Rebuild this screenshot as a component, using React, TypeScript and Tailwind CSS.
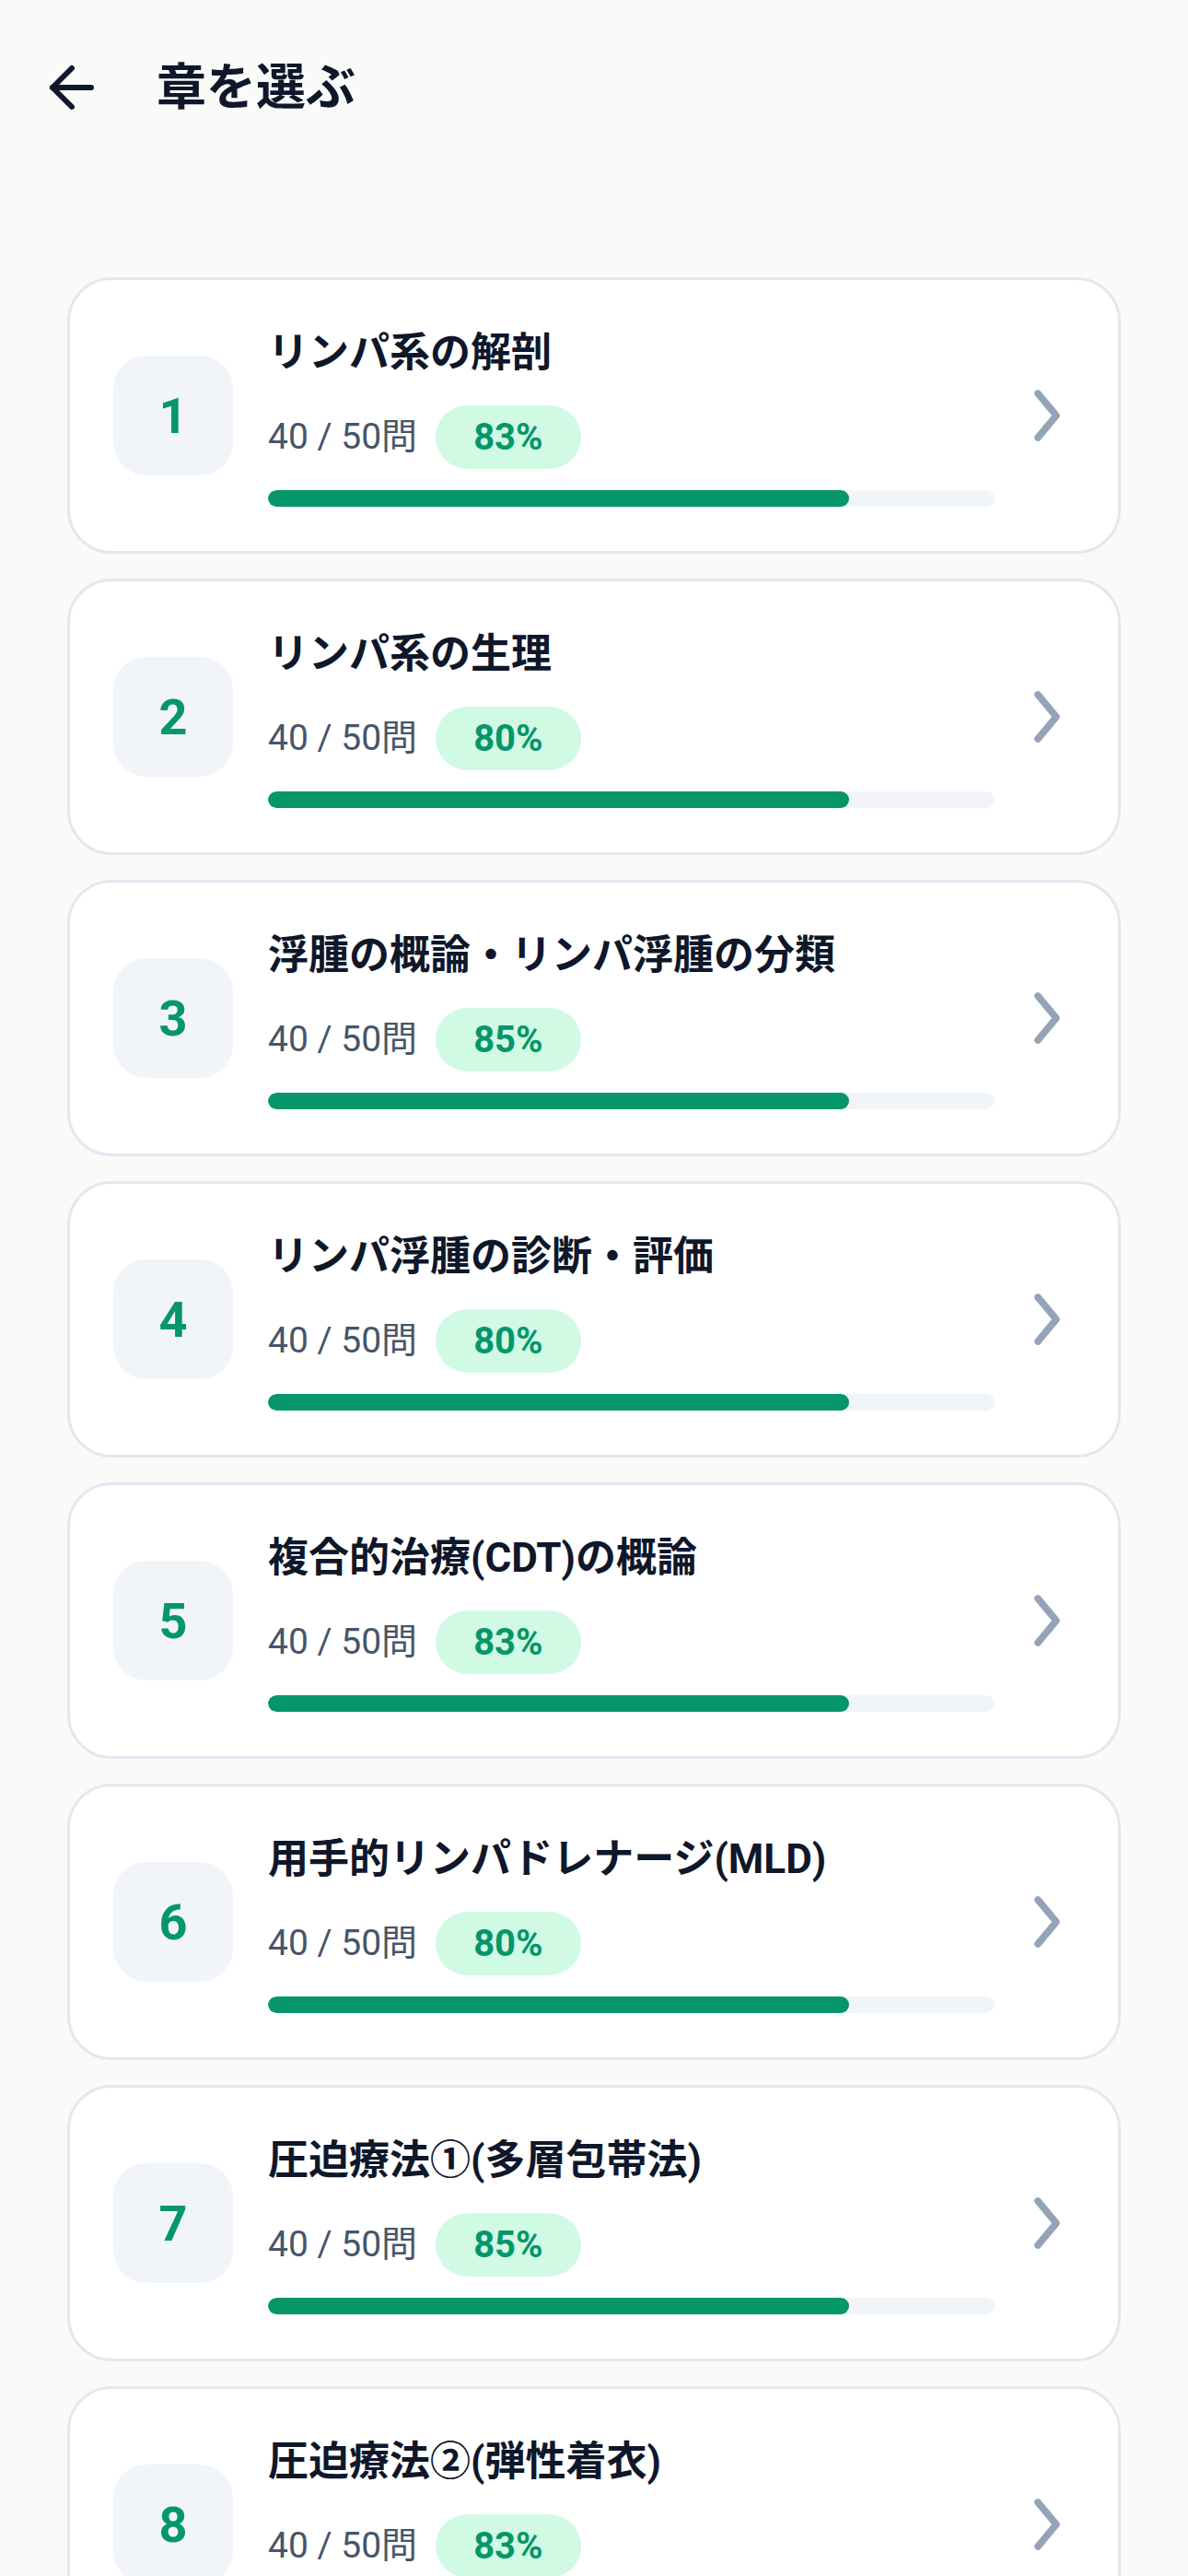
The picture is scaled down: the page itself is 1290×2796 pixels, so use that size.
import { ArrowLeft } from "lucide-react";

const chapters = [
  { no: 1, title: "リンパ系の解剖", rate: 83 },
  { no: 2, title: "リンパ系の生理", rate: 80 },
  { no: 3, title: "浮腫の概論・リンパ浮腫の分類", rate: 85 },
  { no: 4, title: "リンパ浮腫の診断・評価", rate: 80 },
  { no: 5, title: "複合的治療(CDT)の概論", rate: 83 },
  { no: 6, title: "用手的リンパドレナージ(MLD)", rate: 80 },
  { no: 7, title: "圧迫療法①(多層包帯法)", rate: 85 },
  { no: 8, title: "圧迫療法②(弾性着衣)", rate: 83 },
];

function Chevron() {
  return (
    <svg width="28" height="56" viewBox="0 0 28 56" fill="none" className="shrink-0">
      <polyline
        points="4,4 24,28 4,52"
        stroke="#94a3b8"
        strokeWidth="7.5"
        strokeLinecap="round"
        strokeLinejoin="round"
      />
    </svg>
  );
}

function ChapterCard({ no, title, rate }: { no: number; title: string; rate: number }) {
  return (
    <button
      type="button"
      className="flex items-center w-full text-left bg-white border-[3px] border-[#e2e8f0] rounded-[48px] pl-[47px] pr-[63px] py-[48px]"
    >
      <div className="w-[130px] h-[130px] shrink-0 rounded-[36px] bg-[#f1f5f9] flex items-center justify-center text-[54px] font-bold text-[#059669]">
        {no}
      </div>
      <div className="ml-[38px] flex-1 flex flex-col">
        <h2 className="text-[44px] leading-[63px] font-bold text-[#0f172a]">{title}</h2>
        <div className="mt-[25px] flex items-center gap-[20px]">
          <span className="text-[39px] text-[#475569]">40 / 50問</span>
          <span className="h-[69px] px-[41px] rounded-full bg-[#d1fae5] text-[#059669] text-[40px] font-bold flex items-center">
            {rate}%
          </span>
        </div>
        <div className="mt-[23px] h-[18px] rounded-full bg-[#f1f5f9] overflow-hidden">
          <div className="h-full rounded-full bg-[#059669]" style={{ width: "80%" }} />
        </div>
      </div>
      <div className="ml-[43px]">
        <Chevron />
      </div>
    </button>
  );
}

export default function App() {
  return (
    <div
      className="min-h-[2796px] bg-[#fafaf9] overflow-hidden"
      style={{ fontFamily: 'Roboto, "Noto Sans CJK JP", sans-serif' }}
    >
      <header className="flex items-center h-[190px] pl-[42px]">
        <ArrowLeft size={72} strokeWidth={2} color="#0f172a" />
        <h1 className="ml-[56px] text-[54px] font-bold text-[#0f172a]">章を選ぶ</h1>
      </header>
      <main className="px-[73px] pt-[111px] flex flex-col gap-[27px]">
        {chapters.map((c) => (
          <ChapterCard key={c.no} {...c} />
        ))}
      </main>
    </div>
  );
}
